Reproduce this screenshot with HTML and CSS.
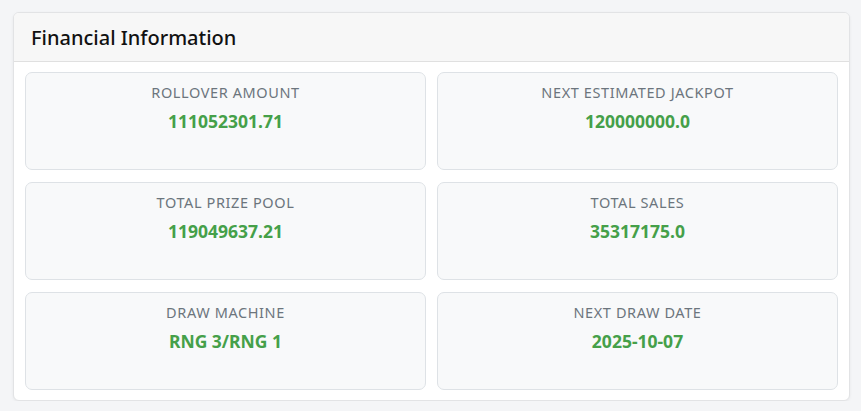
FILE: index.html
```html
<!DOCTYPE html>
<html lang="en">
<head>
<meta charset="utf-8">
<title>Financial Information</title>
<link rel="stylesheet" href="styles.css">
</head>
<body>
<section class="card">
  <header class="card-header">
    <h2 class="card-title">Financial Information</h2>
  </header>
  <div class="card-body">
    <div class="stat">
      <div class="stat-label">Rollover Amount</div>
      <div class="stat-value">111052301.71</div>
    </div>
    <div class="stat">
      <div class="stat-label">Next Estimated Jackpot</div>
      <div class="stat-value">120000000.0</div>
    </div>
    <div class="stat">
      <div class="stat-label">Total Prize Pool</div>
      <div class="stat-value">119049637.21</div>
    </div>
    <div class="stat">
      <div class="stat-label">Total Sales</div>
      <div class="stat-value">35317175.0</div>
    </div>
    <div class="stat">
      <div class="stat-label">Draw Machine</div>
      <div class="stat-value">RNG 3/RNG 1</div>
    </div>
    <div class="stat">
      <div class="stat-label">Next Draw Date</div>
      <div class="stat-value">2025-10-07</div>
    </div>
  </div>
</section>
</body>
</html>
```

FILE: styles.css
```css
html, body {
  margin: 0;
  padding: 0;
}
body {
  background: #f4f5f7;
  font-family: "Noto Sans", "Open Sans", "DejaVu Sans", sans-serif;
  padding: 12px 11px 0 13px;
}
.card {
  background: #ffffff;
  border: 1px solid #e2e3e5;
  border-radius: 6px;
  box-shadow: 0 1px 3px rgba(0, 0, 0, 0.06);
  overflow: hidden;
}
.card-header {
  background: #f7f7f7;
  border-bottom: 1px solid #e0e0e0;
  height: 48px;
  display: flex;
  align-items: center;
  padding: 0 17px;
}
.card-title {
  margin: 0;
  font-size: 20px;
  font-weight: 500;
  color: #111;
}
.card-body {
  display: grid;
  grid-template-columns: 1fr 1fr;
  gap: 12px 11px;
  padding: 10px 11px 10px 11px;
}
.stat {
  background: #f8f9fa;
  border: 1px solid #dee2e6;
  border-radius: 7px;
  height: 98px;
  box-sizing: border-box;
  text-align: center;
  padding-top: 9px;
}
.stat-label {
  text-transform: uppercase;
  color: #6c757d;
  font-size: 14.5px;
  letter-spacing: 0.6px;
  line-height: 20px;
}
.stat-value {
  color: #45a049;
  font-weight: 700;
  font-size: 17.5px;
  line-height: 24px;
  margin-top: 7px;
}
```
